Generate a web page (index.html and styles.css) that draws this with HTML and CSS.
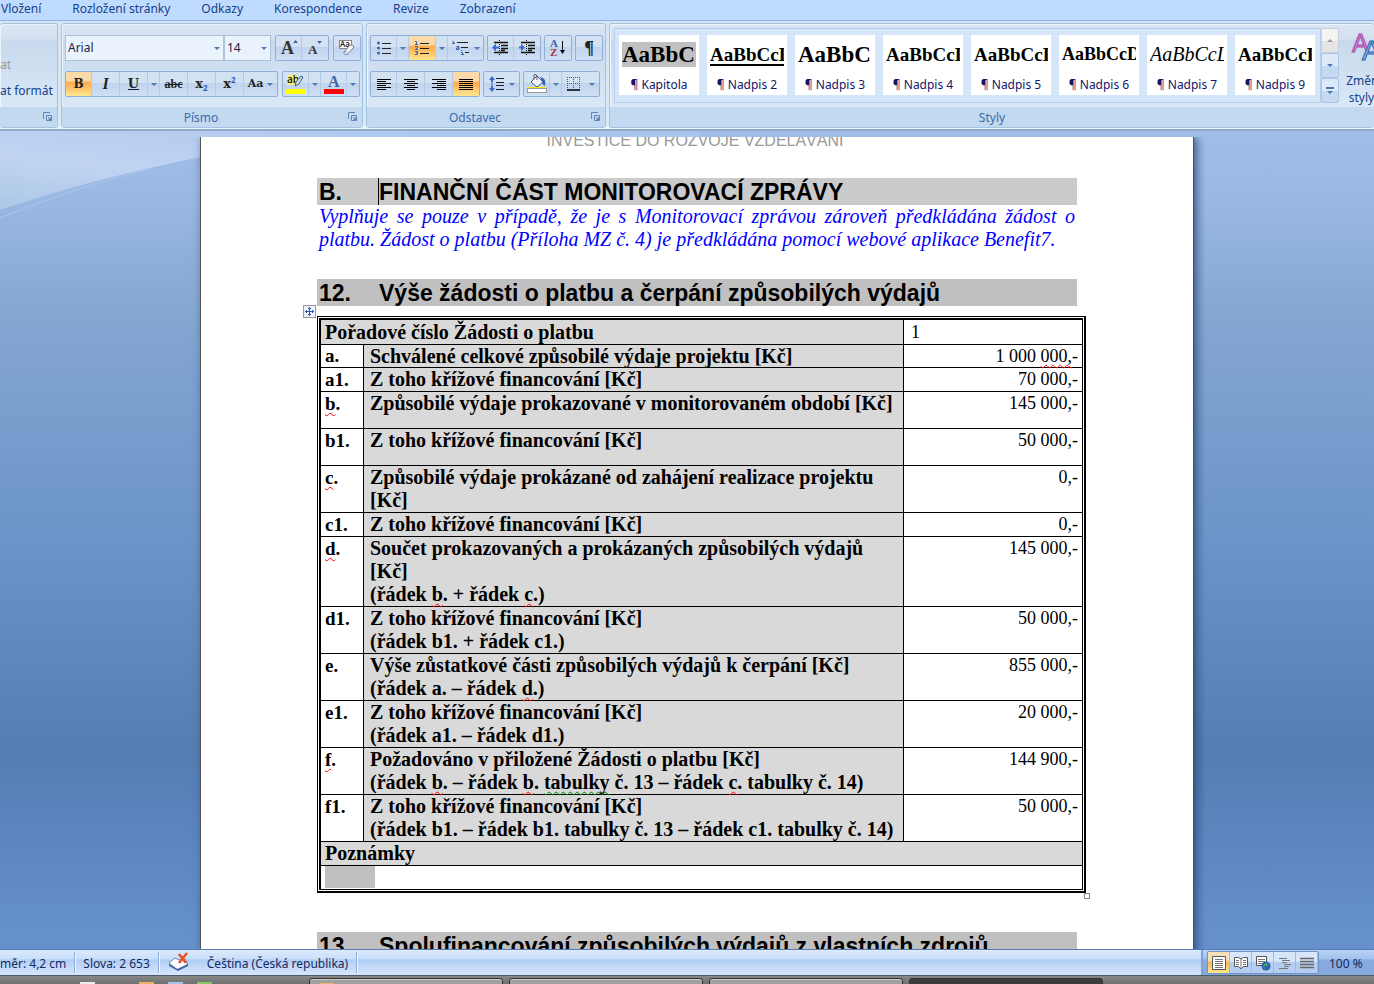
FILE: index.html
```html
<!DOCTYPE html>
<html lang="cs">
<head>
<meta charset="utf-8">
<title>Monitorovací zpráva</title>
<link rel="stylesheet" href="styles.css">
</head>
<body>
<div class="app">
<nav class="tabs">
  <a href="#">Vložení</a><a href="#">Rozložení stránky</a><a href="#">Odkazy</a><a href="#">Korespondence</a><a href="#">Revize</a><a href="#">Zobrazení</a>
</nav>
<div class="ribbon">
  <section class="group group-clip">
    <div class="body clip-body">
      <button class="plain off">at</button>
      <button class="plain">at formát</button>
    </div>
    <footer><button class="launch" aria-label="Schránka"><svg width="9" height="9"><path d="M.5 7V.5H7M3.500 8.500V3.500h5v5zM5 5l3 3" fill="none" stroke="#5f86b4"/><path d="M5 8h3V5z" fill="#5f86b4"/></svg></button></footer>
  </section>

  <section class="group group-font">
    <div class="body rows">
      <div class="row">
        <div class="combos">
          <span class="combo combo-name"><select aria-label="Písmo"><option>Arial</option></select><i class="arr"></i></span>
          <span class="combo combo-size"><select aria-label="Velikost"><option>14</option></select><i class="arr"></i></span>
        </div>
        <div class="set">
          <button class="b26" aria-label="Zvětšit písmo"><svg width="22" height="22"><text x="3" y="17" class="ga" font-size="18">A</text><path d="M15 6l2.500-3L20 6z" fill="#3f65a8"/></svg></button>
          <button class="b26" aria-label="Zmenšit písmo"><svg width="22" height="22"><text x="4" y="17" class="ga" font-size="13">A</text><path d="M13 4l2.500 3L18 4z" fill="#3f65a8"/></svg></button>
        </div>
        <div class="set">
          <button class="b26" aria-label="Vymazat formátování"><svg width="22" height="22"><rect x="3.500" y="3.500" width="12" height="8" fill="#fff" stroke="#888"/><text x="4" y="10" font-size="8" class="sans">Aa</text><path d="M8 15l6-7q3-1 4 2l-6 7q-4 2-4-2z" fill="#f3f5fb" stroke="#6b7c9c"/><path d="M9 14l4 3" stroke="#9aa8c2"/></svg></button>
        </div>
      </div>
      <div class="row">
        <div class="set">
          <button class="b26 hot txt"><b>B</b></button>
          <button class="b28 txt"><i class="it">I</i></button>
          <button class="b28 txt"><u>U</u></button>
          <button class="b12" aria-label="Podtržení"><i class="arr"></i></button>
          <button class="b28 txt small"><s>abc</s></button>
          <button class="b28 txt">x<sub>2</sub></button>
          <button class="b28 txt">x<sup>2</sup></button>
          <button class="b33 txt aa">Aa<i class="arr"></i></button>
        </div>
        <div class="set">
          <button class="b26" aria-label="Zvýraznění"><svg width="24" height="24"><rect x="3" y="3" width="11" height="10" fill="#f5f07a"/><text x="3" y="11" font-size="10" class="sans">ab</text><path d="M11 14l1-4 5-6 2 1-4 7z" fill="#cfdaf0" stroke="#44618f"/><rect x="2" y="17" width="20" height="5" fill="#ff0"/></svg></button>
          <button class="b12" aria-label="Barva zvýraznění"><i class="arr"></i></button>
          <button class="b26" aria-label="Barva písma"><svg width="24" height="24"><text x="6" y="15" font-size="16" class="ga blue">A</text><rect x="2" y="17" width="20" height="5" fill="red"/></svg></button>
          <button class="b12" aria-label="Výběr barvy písma"><i class="arr"></i></button>
        </div>
      </div>
    </div>
    <footer>Písmo<button class="launch" aria-label="Dialog Písmo"><svg width="9" height="9"><path d="M.5 7V.5H7M3.500 8.500V3.500h5v5zM5 5l3 3" fill="none" stroke="#5f86b4"/><path d="M5 8h3V5z" fill="#5f86b4"/></svg></button></footer>
  </section>

  <section class="group group-par">
    <div class="body rows">
      <div class="row">
        <div class="set">
          <button class="b26" aria-label="Odrážky"><svg width="16" height="16"><g fill="#3c62b0"><circle cx="2.500" cy="3" r="1.500"/><circle cx="2.500" cy="8" r="1.500"/><circle cx="2.500" cy="13" r="1.500"/></g><path d="M6 3.500h9M6 8.500h9M6 13.500h9" stroke="#222"/></svg></button>
          <button class="b12" aria-label="Druhy odrážek"><i class="arr"></i></button>
          <button class="b27 hot" aria-label="Číslování"><svg width="16" height="16"><path d="M1 1.500h1.500v3M1 4.500h3M1 6.500h2.500v1L1.500 9.500H4M1 11.500h2.500v3H1M2 13h1.500" stroke="#3c62b0" fill="none"/><path d="M6 3.500h9M6 8.500h9M6 13.500h9" stroke="#222"/></svg></button>
          <button class="b12" aria-label="Druhy číslování"><i class="arr"></i></button>
          <button class="b35" aria-label="Víceúrovňový seznam"><svg width="18" height="16"><path d="M.5 1.500h1v2M0 3.500h3M4.500 6.500h2.500v3H4.500V8H7M9.500 10v1M9 12.500h1.500v2M9 14.500h3" stroke="#3c62b0" fill="none"/><path d="M5 2.500h11M9 7.500h7M13 12.500h4" stroke="#222"/></svg><i class="arr"></i></button>
        </div>
        <div class="set">
          <button class="b26" aria-label="Zmenšit odsazení"><svg width="17" height="16"><path d="M2 2.500h14M9 5.500h7M9 8.500h7M9 10.500h4M2 12.500h14" stroke="#111" stroke-width="1.500"/><path d="M7.500 0v16" stroke="#111" stroke-dasharray="1 1"/><path d="M0 7.500l4-4v3h3v2H4v3z" fill="#3c6ad0"/></svg></button>
          <button class="b26" aria-label="Zvětšit odsazení"><svg width="17" height="16"><path d="M2 2.500h14M9 5.500h7M9 8.500h7M9 10.500h4M2 12.500h14" stroke="#111" stroke-width="1.500"/><path d="M7.500 0v16" stroke="#111" stroke-dasharray="1 1"/><path d="M6 7.500l-4-4v3H0v2h2v3z" fill="#3c6ad0"/></svg></button>
        </div>
        <div class="set"><button class="b26" aria-label="Seřadit"><svg width="18" height="20"><text x="1" y="9" font-size="11" class="ga blue">A</text><text x="1" y="18" font-size="11" class="ga red">Z</text><path d="M13.500 3v12" stroke="#111"/><path d="M11 12h5l-2.500 4z"/></svg></button></div>
        <div class="set"><button class="b26 pil">¶</button></div>
      </div>
      <div class="row">
        <div class="set">
          <button class="b26" aria-label="Vlevo"><svg width="14" height="13"><path d="M0 1.500h14M0 3.500h9M0 5.500h14M0 7.500h9M0 9.500h14M0 11.500h9" stroke="#000"/></svg></button>
          <button class="b28" aria-label="Na střed"><svg width="14" height="13"><path d="M0 1.500h14M3 3.500h8M0 5.500h14M3 7.500h8M0 9.500h14M3 11.500h8" stroke="#000"/></svg></button>
          <button class="b28" aria-label="Vpravo"><svg width="14" height="13"><path d="M0 1.500h14M5 3.500h9M0 5.500h14M5 7.500h9M0 9.500h14M5 11.500h9" stroke="#000"/></svg></button>
          <button class="b26 hot" aria-label="Do bloku"><svg width="14" height="13"><path d="M0 1.500h14M0 3.500h14M0 5.500h14M0 7.500h14M0 9.500h14M0 11.500h14" stroke="#000"/></svg></button>
        </div>
        <div class="set"><button class="b35" aria-label="Řádkování"><svg width="16" height="16"><path d="M3 0l3 4H4v2H2V4H0zM2 10h2v2h2l-3 4-3-4h2z" fill="#3c6ad0"/><path d="M3 6v4" stroke="#3c6ad0"/><path d="M7 2.500h8M7 6.500h8M7 9.500h8M7 13.500h8" stroke="#222"/></svg><i class="arr"></i></button></div>
        <div class="set">
          <button class="b26" aria-label="Stínování"><svg width="24" height="22"><path d="M6 9l6-6 6 6-6 5z" fill="#f2f5fb" stroke="#4e5a70"/><path d="M9 6V2q2-2 3 1v4" fill="none" stroke="#4e5a70"/><path d="M15 4q7 1 5 9-3-1-3-5z" fill="#3463b2"/><path d="M3 14.500h17" stroke="#f5ea00"/><rect x="2.500" y="15.500" width="19" height="4" fill="#fff" stroke="#999"/></svg></button>
          <button class="b12" aria-label="Barva stínování"><i class="arr"></i></button>
          <button class="b37" aria-label="Ohraničení"><svg width="14" height="14"><path d="M.5 0v13M6.500 0v13M12.500 0v13M0 .5h13M0 6.500h13" stroke="#555" stroke-dasharray="1 1"/><path d="M0 13h13" stroke="#000" stroke-width="1.500"/></svg><i class="arr"></i></button>
        </div>
      </div>
    </div>
    <footer>Odstavec<button class="launch" aria-label="Dialog Odstavec"><svg width="9" height="9"><path d="M.5 7V.5H7M3.500 8.500V3.500h5v5zM5 5l3 3" fill="none" stroke="#5f86b4"/><path d="M5 8h3V5z" fill="#5f86b4"/></svg></button></footer>
  </section>

  <section class="group group-styles">
    <div class="body styles">
      <div class="gallery">
        <button class="style"><span class="demo big mark">AaBbC</span><span>¶ Kapitola</span></button>
        <button class="style"><span class="demo line">AaBbCcI</span><span>¶ Nadpis 2</span></button>
        <button class="style"><span class="demo big">AaBbC</span><span>¶ Nadpis 3</span></button>
        <button class="style"><span class="demo">AaBbCcI</span><span>¶ Nadpis 4</span></button>
        <button class="style"><span class="demo">AaBbCcI</span><span>¶ Nadpis 5</span></button>
        <button class="style"><span class="demo less">AaBbCcD</span><span>¶ Nadpis 6</span></button>
        <button class="style"><span class="demo slant">AaBbCcL</span><span>¶ Nadpis 7</span></button>
        <button class="style"><span class="demo">AaBbCcI</span><span>¶ Nadpis 9</span></button>
      </div>
      <div class="scroll">
        <button class="gray" aria-label="Nahoru"><i class="arr up"></i></button>
        <button aria-label="Dolů"><i class="arr"></i></button>
        <button class="more" aria-label="Více"><i class="arr"></i></button>
      </div>
      <button class="change"><svg width="34" height="32"><text x="1" y="22" font-size="25" class="mag">A</text><text x="11" y="30" font-size="28" class="azure">A</text></svg><span>Změnit<br>styly <i class="arr"></i></span></button>
    </div>
    <footer>Styly</footer>
  </section>
</div>

<main class="desk">
  <svg class="swoosh" width="700" height="100" viewBox="0 0 700 100"><defs><linearGradient id="g" x1="0" y1="1" x2="1" y2="0"><stop offset="0" stop-color="#abc8e6"/><stop offset=".35" stop-color="#c0d4f2"/><stop offset="1" stop-color="#a6c3ec"/></linearGradient></defs><path d="M0 0H700V6H300L201 26Q95 47 0 79z" fill="url(#g)"/><path d="M0 87Q75 56 150 38" fill="none" stroke="#aac6ea"/></svg>
  <article class="page">
    <p class="motto">INVESTICE DO ROZVOJE VZDĚLÁVÁNÍ</p>
    <h1 class="head lead"><span>B.</span><span class="caret">FINANČNÍ ČÁST MONITOROVACÍ ZPRÁVY</span></h1>
    <p class="note">Vyplňuje se pouze v&nbsp;případě, že je s&nbsp;Monitorovací zprávou zároveň předkládána žádost o platbu. Žádost o platbu (Příloha MZ č. 4) je předkládána pomocí webové aplikace Benefit7.</p>
    <h2 class="head"><span>12.</span><span>Výše žádosti o platbu a čerpání způsobilých výdajů</span></h2>
    <div class="frame">
      <button class="move" aria-label="Přesunout tabulku"><svg width="11" height="11"><path d="M5.500 1v9M1 5.500h9M4 2.500h3M4 8.500h3M2.500 4v3M8.500 4v3" stroke="#2c5bb8"/></svg></button>
      <i class="grip"></i>
      <table>
        <colgroup><col class="c1"><col><col class="c3"></colgroup>
        <tr class="first"><th colspan="2" class="wide">Pořadové číslo Žádosti o platbu</th><td class="one">1</td></tr>
        <tr class="low"><th class="k">a.</th><th>Schválené celkové způsobilé výdaje projektu [Kč]</th><td>1 000 <em>000,</em>-</td></tr>
        <tr><th class="k">a1.</th><th>Z toho křížové financování [Kč]</th><td>70 000,-</td></tr>
        <tr class="tall"><th class="k"><em>b</em>.</th><th>Způsobilé výdaje prokazované v monitorovaném období [Kč]</th><td>145 000,-</td></tr>
        <tr class="tall"><th class="k">b1.</th><th>Z toho křížové financování [Kč]</th><td>50 000,-</td></tr>
        <tr><th class="k"><em>c</em>.</th><th>Způsobilé výdaje prokázané od zahájení realizace projektu<br>[Kč]</th><td>0,-</td></tr>
        <tr><th class="k">c1.</th><th>Z toho křížové financování [Kč]</th><td>0,-</td></tr>
        <tr><th class="k"><em>d</em>.</th><th>Součet prokazovaných a prokázaných způsobilých výdajů<br>[Kč]<br>(řádek <em>b</em>. + řádek <em>c</em>.)</th><td>145 000,-</td></tr>
        <tr><th class="k">d1.</th><th>Z toho křížové financování [Kč]<br>(řádek b1. + řádek c1.)</th><td>50 000,-</td></tr>
        <tr><th class="k">e.</th><th>Výše zůstatkové části způsobilých výdajů k čerpání [Kč]<br>(řádek a. – řádek <em>d</em>.)</th><td>855 000,-</td></tr>
        <tr><th class="k">e1.</th><th>Z toho křížové financování [Kč]<br>(řádek a1. – řádek d1.)</th><td>20 000,-</td></tr>
        <tr><th class="k"><em>f</em>.</th><th>Požadováno v přiložené Žádosti o platbu [Kč]<br>(řádek <em>b</em>. – řádek <em>b</em>. <em class="green">tabulky</em> č. 13 – řádek <em>c</em>. tabulky č. 14)</th><td>144 900,-</td></tr>
        <tr><th class="k">f1.</th><th>Z toho křížové financování [Kč]<br>(řádek b1. – řádek b1. tabulky č. 13 – řádek c1. tabulky č. 14)</th><td>50 000,-</td></tr>
        <tr><th colspan="3" class="wide">Poznámky</th></tr>
        <tr class="last"><td colspan="3" class="blank"><span class="field"></span></td></tr>
      </table>
    </div>
    <h2 class="head next"><span>13.</span><span>Spolufinancování způsobilých výdajů z vlastních zdrojů</span></h2>
  </article>
</main>

<footer class="status">
  <span class="cell s1">měr: 4,2 cm</span>
  <span class="cell s2">Slova: 2 653</span>
  <span class="cell s3"><svg width="22" height="20"><path d="M1 11l6-5 4 2 6-1 3 5-10 6z" fill="#fff" stroke="#6c83b4"/><path d="M1 12l8 5 11-5v2l-10 5-9-5z" fill="#46649f"/><path d="M11 2l7 9M19 1l-8 10" stroke="#f04e23" stroke-width="2.500"/></svg>Čeština (Česká republika)</span>
  <div class="views">
    <div class="viewset">
      <button class="on" aria-label="Rozložení při tisku"><svg width="16" height="16"><path d="M1.500 1.500h13v13h-13z" fill="#fff" stroke="#555"/><path d="M4 4.500h8M4 6.500h8M4 8.500h8M4 10.500h8M4 12.500h8" stroke="#777"/></svg></button>
      <button aria-label="Čtení"><svg width="16" height="16"><path d="M1.500 2.500h4L8 4l2.500-1.500h4v9h-4L8 14l-2.500-2.500h-4z" fill="#fff" stroke="#555"/><path d="M8 4v10M3 5.500h3M3 7.500h3M3 9.500h3M10 5.500h3M10 7.500h3M10 9.500h3" stroke="#777"/></svg></button>
      <button aria-label="Web"><svg width="16" height="16"><path d="M1.500 1.500h10v9h-10z" fill="#fff" stroke="#555"/><path d="M3 4.500h7M3 6.500h7M3 8.500h5" stroke="#777"/><circle cx="11" cy="11" r="4.500" fill="#2b62b0"/><path d="M8 11q2-4 5-2-1 3-3 2t0 3q-2-1-2-3z" fill="#46b060"/></svg></button>
      <button aria-label="Osnova"><svg width="16" height="16"><path d="M2 3.500h8M5 5.500h8M5 7.500h5M7 9.500h7M7 11.500h5M2 13.500h9" stroke="#777"/></svg></button>
      <button aria-label="Koncept"><svg width="16" height="16"><path d="M1 3.500h14M1 6.500h14M1 9.500h14M1 12.500h14" stroke="#666" stroke-width="1.500"/></svg></button>
    </div>
    <button class="zoom">100 %</button>
  </div>
</footer>
<div class="taskbar"><div class="quick"><i class="q1"></i><i class="q2"></i><i class="q3"></i><i class="q4"></i></div><div class="task"><i></i></div><div class="task"></div><div class="task"></div><div class="task dark"></div><div class="tray"></div></div>
</div>
</body>
</html>
```

FILE: styles.css
```css
* { box-sizing: border-box; }
body { margin: 0; font: 12px/16px "Noto Sans", "Open Sans", sans-serif; color: #15428b; }
button { font: inherit; color: inherit; border: 0; padding: 0; background: none; display: flex; align-items: center; justify-content: center; }
svg { display: block; flex: none; }
.app { height: 100vh; display: flex; flex-direction: column; overflow: hidden; }

.tabs { display: flex; gap: 31px; height: 20px; flex: none; background: #bfdbff; padding-left: 1px; line-height: 18px; }
.tabs a { color: #15428b; text-decoration: none; white-space: nowrap; }

.ribbon { flex: none; display: flex; gap: 3px; height: 111px; padding-top: 2px; border-top: 1px solid #8db2e3; border-bottom: 2px solid #8fa9c8; background: linear-gradient(#d6e4f3, #dbe8f6 95%, #e8fafc); overflow: hidden; }
.group { flex: none; display: flex; flex-direction: column; height: 105px; border: 1px solid #a3c3e0; border-radius: 3px; background: linear-gradient(#dce7f3, #d2dff0 15%, #c8d9ed 16%, #d9e8f6 80%); box-shadow: inset 1px 1px #edf4fb; overflow: hidden; }
.group-clip { width: 58px; border-left: 0; }
.group-font { width: 302px; }
.group-par { width: 240px; }
.group-styles { flex: 1; border-right: 0; min-width: 0; }
.body { flex: 1; min-height: 0; }
.group > footer { flex: none; height: 20px; background: #c2d9f0; color: #3e6aaa; text-align: center; line-height: 22px; position: relative; padding-right: 22px; }
.group-styles > footer { padding-right: 0; }
.launch { position: absolute; right: 5px; top: 5px; }
.clip-body { padding-top: 33px; display: flex; flex-direction: column; align-items: flex-start; gap: 10px; }
.plain { white-space: nowrap; }
.off { color: #9a9a9a; }

.rows { padding: 11px 3px 0; display: flex; flex-direction: column; gap: 10px; }
.row { display: flex; gap: 3px; }
.group-font .row { gap: 4px; }
.combos { display: flex; width: 206px; }
.combo { position: relative; height: 26px; }
.combo-name { width: 159px; }
.combo-size { width: 47px; }
.combo select { appearance: none; width: 100%; height: 26px; border: 1px solid #abc1de; border-radius: 0; background: #eaf2fb; font: inherit; color: #1c1c44; padding: 0 2px; }
.combo .arr { position: absolute; right: 4px; top: 12px; }
.arr { display: inline-block; border: solid transparent; border-width: 3px 3px 0; border-top-color: #4f78b0; width: 6px; height: 3px; flex: none; }
.arr.up { border-width: 0 3px 3px; border-bottom-color: #999; }
.set { display: flex; flex: none; height: 26px; border: 1px solid #8fafd8; border-radius: 2px; background: linear-gradient(#d3e2f3 45%, #bfd3ec 46%, #cfe0f5); }
.set button { border-right: 1px solid #b4cae6; overflow: hidden; height: 24px; color: #222; }
.set button:last-child { border-right: 0; }
.b12 { width: 12px; } .b26 { width: 26px; } .b27 { width: 27px; } .b28 { width: 28px; } .b33 { width: 33px; gap: 4px; } .b35 { width: 35px; gap: 4px; } .b37 { width: 37px; gap: 8px; }
.set .hot { background: linear-gradient(#fbd9a8 35%, #fcab4c 45%, #fee68f); }
.txt { font: bold 13px/20px "DejaVu Serif", serif; }
.txt b { font-size: 12px; }
.txt .it { font-family: "Liberation Serif", serif; font-size: 16px; }
.small { font: bold 12px/20px "Liberation Serif", serif; }
.txt sub, .txt sup { font: bold 8px/8px "Open Sans", sans-serif; color: #2c5bb8; }
.txt sub { align-self: flex-end; padding-bottom: 4px; } .txt sup { align-self: flex-start; padding-top: 4px; }
.aa { font-size: 11px; }
.pil { font: bold 18px/20px "Liberation Serif", serif; }
.ga { font-family: "Liberation Serif", serif; font-weight: bold; fill: #333; }
.sans { font-family: "Open Sans", sans-serif; font-weight: 600; fill: #111; }
.blue { fill: #3c62a8; } .red { fill: #a33b3b; }

.styles { display: flex; align-items: flex-start; padding: 4px 0 0 4px; }
.gallery { flex: none; display: flex; gap: 8px; padding: 6px 4px; height: 75px; width: 707px; border: 1px solid #b6cfee; background: #d5e6f8; }
.style { width: 80px; height: 60px; flex: none; flex-direction: column; justify-content: flex-start; background: #fff; color: #15156b; white-space: nowrap; }
.demo { width: 74px; height: 25px; margin: 7px 0 10px; overflow: hidden; text-align: left; font: bold 19px/25px "Liberation Serif", serif; color: #000; }
.big { font-size: 23px; }
.less { font-size: 18px; }
.mark { background: #c0c0c0; }
.line { text-decoration: underline 2px; text-underline-offset: 3px; }
.slant { font-weight: normal; font-style: italic; font-size: 20px; }
.scroll { width: 18px; flex: none; }
.scroll button { width: 18px; height: 25px; border: 1px solid #a9c5e8; border-radius: 2px; background: linear-gradient(#dbe9f9 50%, #c5d9f1 51%); }
.scroll .gray { background: linear-gradient(#f4f4f4 50%, #e4e4e4 51%); border-color: #c9cfd8; }
.more { flex-direction: column; gap: 2px; }
.more::before { content: ""; width: 8px; height: 2px; background: #4f78b0; }
.change { flex-direction: column; margin-left: 8px; color: #15428b; width: 38px; flex: none; white-space: nowrap; }
.change span { line-height: 17px; margin-top: 10px; }
.change svg { margin-left: 4px; margin-top: 2px; }
.mag, .azure { font-family: "Liberation Sans", sans-serif; }
.mag { fill: #d879cf; stroke: #a64fb0; } .azure { fill: #8ab8f0; stroke: #2d62ab; }

.desk { flex: 1; min-height: 0; position: relative; display: flex; overflow: hidden; padding: 6px 181px 0 201px; background: linear-gradient(#a0bde8, #9bb9e4 7%, #83a5d2 24%, #6c94c8 50%, #547db3 76%, #6690cc 98%); }
.swoosh { position: absolute; left: 0; top: 0; }
.page { position: relative; flex: 1; min-width: 0; background: #fff; color: #000; padding: 0 116px; box-shadow: -1px 0 #555, 1px 0 #444e5c, 3px 0 10px #2b4a75; height: 1000px; clip-path: inset(0 -12px 0 -12px); }
.motto { margin: -6px 4px 27px 0; text-align: center; font: 16px/20px "Liberation Sans", sans-serif; color: #999; }
.head { margin: 0; display: flex; height: 27px; background: #c0c0c0; font: bold 23px/29px "Liberation Sans", sans-serif; white-space: nowrap; padding-left: 2px; }
.head span:first-child { width: 60px; flex: none; }
.lead { background: #cbcbcb; }
.caret { box-shadow: -1px 0 #000; }
.note { margin: 0 2px 28px; font: italic 20px/23px "Liberation Serif", serif; color: #00f; text-align: justify; }

.frame { position: relative; margin: 10px -9px 39px 0; border: 1px solid #000; border-width: 1px 2px 2px 1px; padding: 1px; }
.move { position: absolute; left: -15px; top: -12px; width: 13px; height: 13px; border: 1px solid #999; background: #eef2fa; }
.grip { position: absolute; right: -6px; bottom: -8px; width: 6px; height: 6px; border: 1px solid #888; background: #fff; }
table { width: 100%; border-collapse: separate; border-spacing: 0; table-layout: fixed; border: solid #000; border-width: 2px 0 0 2px; font: 18px/23px "Liberation Serif", serif; }
.c1 { width: 43px; } .c3 { width: 179px; }
th, td { padding: 0 4px; border: solid #000; border-width: 0 1px 1px 0; vertical-align: top; text-align: right; white-space: nowrap; }
th { text-align: left; background: #d9d9d9; font-size: 20px; padding-left: 6px; }
.k { background: #fff; padding-left: 4px; font-size: 19px; }
.wide { padding-left: 4px; }
.first th, .first td { line-height: 24px; }
.low th { line-height: 22px; }
.one { text-align: left; padding-left: 7px; }
td { line-height: 22px; }
.tall { height: 37px; }
.blank { text-align: left; line-height: 23px; height: 24px; }
.field { display: block; width: 50px; height: 22px; background: #c0c0c0; }
em { font-style: normal; text-decoration: underline wavy red 1px; text-decoration-skip-ink: none; text-underline-offset: 2px; }
.green { text-decoration-color: green; }

.status { flex: none; height: 27px; display: flex; border-top: 1px solid #567db1; border-bottom: 1px solid #4b5a6c; background: linear-gradient(#dce9fc, #c9dffa 35%, #b0cdf3 40%, #d5e5fb 95%); color: #15285f; white-space: nowrap; }
.cell { border-right: 1px solid #8fadd6; padding: 2px 8px 0; margin: 2px 0; display: flex; align-items: center; box-shadow: 1px 0 #eef5ff; }
.s1 { padding-left: 0; }
.s3 svg { margin: 0 17px 4px 1px; }
.views { margin-left: auto; width: 173px; flex: none; padding-left: 4px; display: flex; align-items: center; gap: 10px; border-left: 2px solid #7ea2d8; background: linear-gradient(#bad2f5, #a4c2ee 35%, #86abdf 40%, #86a9dc); }
.viewset { display: flex; border: 1px solid #6d93c8; border-radius: 2px; }
.viewset button { width: 22px; height: 21px; border-right: 1px solid #9dbbe4; background: linear-gradient(#d8e6fa 45%, #b4cdf0 50%); }
.viewset .on { background: linear-gradient(#f5e0b8 40%, #f6b94e 50%, #fee68f); }
.zoom { padding-top: 2px; }

.taskbar { flex: none; height: 8px; display: flex; gap: 6px; background: linear-gradient(#888, #6f6f6f); overflow: hidden; }
.quick { width: 303px; display: flex; gap: 14px; padding: 6px 0 0 80px; flex: none; }
.quick i { width: 15px; height: 2px; background: #eee; }
.quick .q2 { background: #e9b45c; margin-left: 30px; } .quick .q3 { background: #a9c1e6; } .quick .q4 { background: #8ac56a; }
.task { width: 194px; height: 12px; flex: none; border: 1px solid #333; border-radius: 3px; background: #a0a0a0; margin-top: 2px; box-shadow: inset 0 1px #ccc; padding: 4px 10px; }
.task i { display: block; width: 14px; height: 2px; background: #e9b45c; }
.dark { background: #3c3c3c; box-shadow: none; }
.tray { flex: 1; }
```
